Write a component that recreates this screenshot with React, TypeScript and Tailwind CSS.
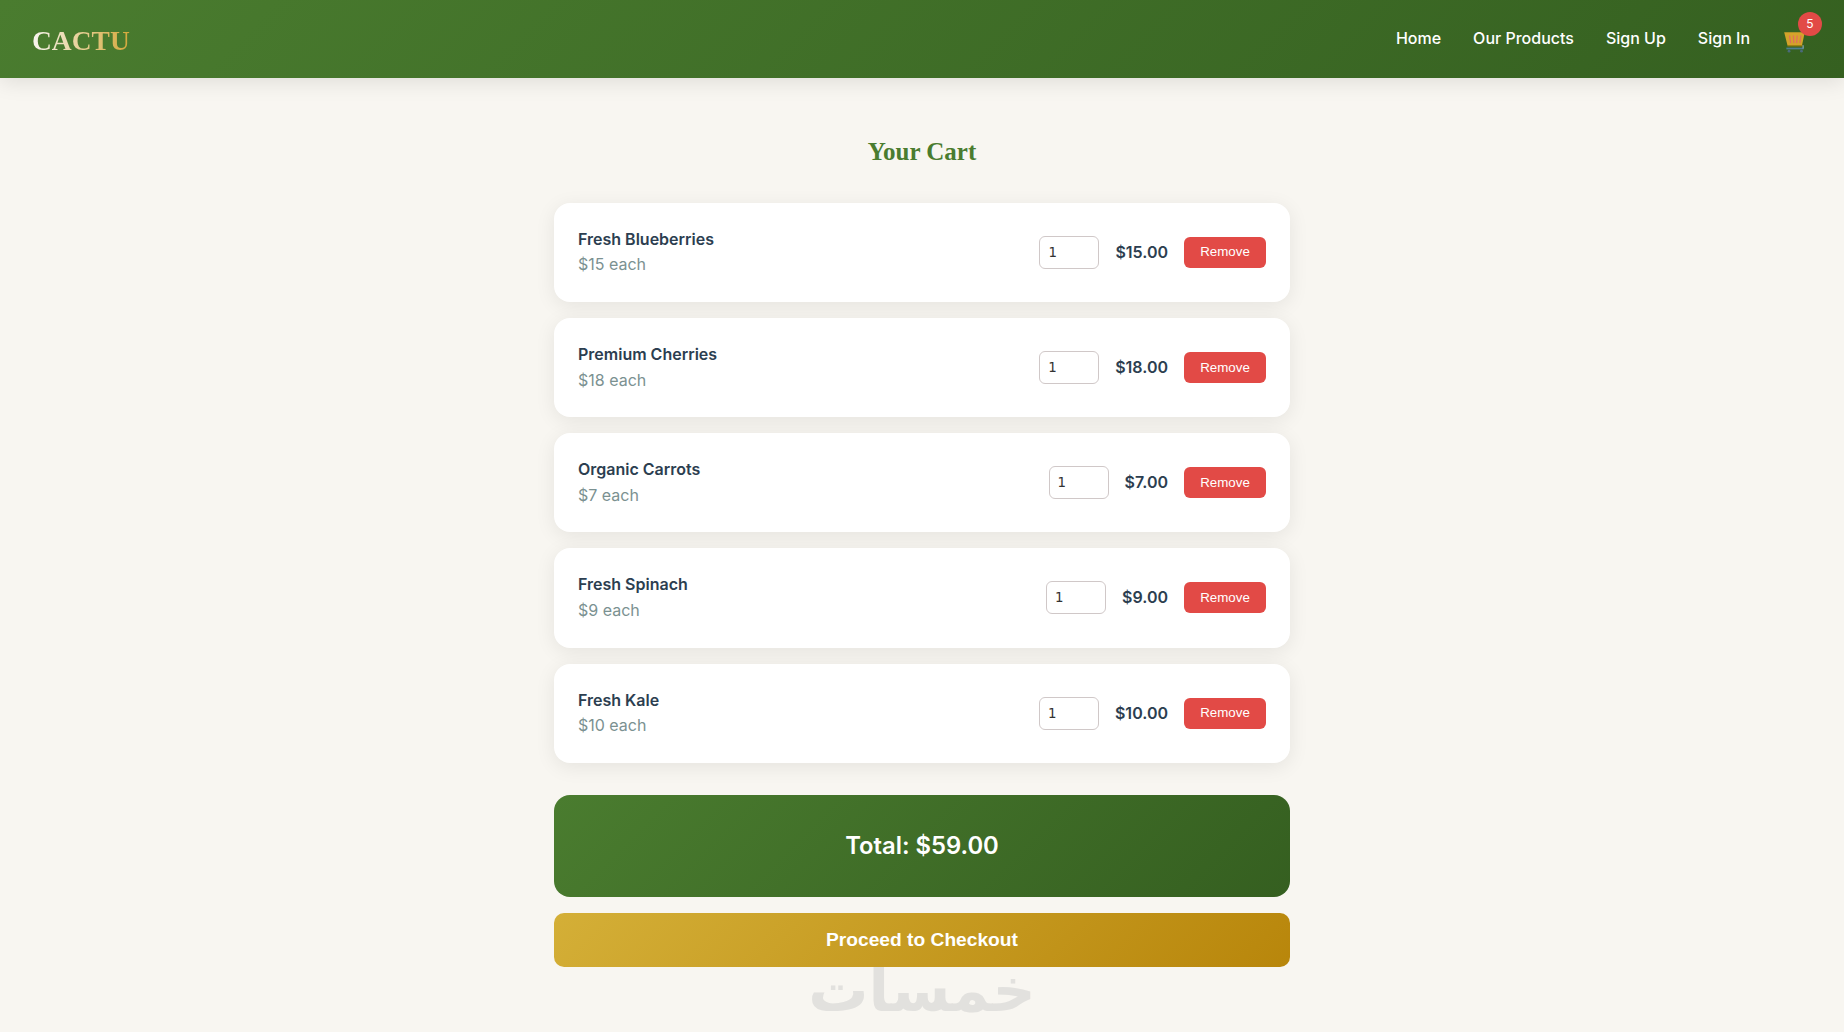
const items = [
  { name: "Fresh Blueberries", each: "$15 each", price: "$15.00" },
  { name: "Premium Cherries", each: "$18 each", price: "$18.00" },
  { name: "Organic Carrots", each: "$7 each", price: "$7.00" },
  { name: "Fresh Spinach", each: "$9 each", price: "$9.00" },
  { name: "Fresh Kale", each: "$10 each", price: "$10.00" },
];

function CartIcon() {
  return (
    <svg width="26" height="26" viewBox="0 0 24 24" className="block translate-y-1">
      <path d="M2 3h19l-2.500 12H5z" fill="#d4a32a" />
      <path d="M7 6l1 7M10.500 6l.5 7M14 6l-.5 7M17.500 6l-1 7" stroke="#e0705a" strokeWidth="1.2" />
      <path d="M5 15.500h14" stroke="#b8860b" strokeWidth="1" />
      <path d="M4 18h16" stroke="#4f7f8f" strokeWidth="1.6" />
      <path d="M19.500 15v3" stroke="#7fa3ad" strokeWidth="1.2" />
      <circle cx="6.500" cy="20.500" r="1.300" fill="#4a6a7a" />
      <circle cx="18" cy="20.500" r="1.300" fill="#4a6a7a" />
    </svg>
  );
}

function CartRow({ item }: { item: (typeof items)[number] }) {
  return (
    <div className="flex items-center justify-between rounded-2xl bg-white p-6 shadow-[0_4px_20px_rgba(0,0,0,0.08)]">
      <div>
        <div className="text-base font-semibold leading-[1.6] text-[#2c3e50]">{item.name}</div>
        <div className="text-base leading-[1.6] text-[#7b9191]">{item.each}</div>
      </div>
      <div className="flex items-center gap-4">
        <input
          type="number"
          defaultValue={1}
          className="h-[33px] w-[60px] rounded-md border border-[#d0c8c8] px-2 font-['DejaVu_Sans',sans-serif] text-[13.33px] text-[#333]"
        />
        <span className="pb-px text-base font-semibold text-[#2c3e50]">{item.price}</span>
        <button className="h-[31px] w-[82px] rounded-md bg-[#e24a46] font-['Liberation_Sans',sans-serif] text-[13.33px] text-white">
          Remove
        </button>
      </div>
    </div>
  );
}

export default function App() {
  return (
    <div className="relative min-h-[1032px] overflow-hidden bg-[#f8f6f1] font-['Inter',sans-serif]">
      <header className="relative z-10 flex h-[78px] items-center justify-between bg-[linear-gradient(135deg,#4a7c2f,#356020)] px-8 shadow-[0_4px_20px_rgba(0,0,0,0.1)]">
        <span className="bg-[linear-gradient(90deg,#f8f6f1,#d4a83a)] bg-clip-text pt-1 font-['Liberation_Serif',serif] text-[27.5px] font-bold text-transparent">
          CACTU
        </span>
        <nav className="flex items-center gap-8 pb-[2px] text-base font-medium text-white">
          <a>Home</a>
          <a>Our Products</a>
          <a>Sign Up</a>
          <a>Sign In</a>
          <a className="relative w-[30px] pl-[0px]">
            <CartIcon />
            <span className="absolute -right-[10px] -top-[13px] flex h-6 w-6 items-center justify-center rounded-full bg-[#e24a46] text-xs font-normal">
              5
            </span>
          </a>
        </nav>
      </header>

      <main className="relative z-10 mx-auto w-[800px] px-8 pt-12">
        <h1 className="mb-[24.8px] text-center font-['Liberation_Serif',serif] text-[25px] font-bold leading-[52px] text-[#4a7c2f]">
          Your Cart
        </h1>
        <div className="flex flex-col gap-4">
          {items.map((item) => (
            <CartRow key={item.name} item={item} />
          ))}
        </div>
        <div className="mt-8 rounded-2xl bg-[linear-gradient(135deg,#4a7c2f,#355f20)] p-8 text-center text-[23.8px] font-semibold leading-[38.4px] text-white">
          Total: $59.00
        </div>
        <button className="mt-4 h-[54px] w-full rounded-[10px] bg-[linear-gradient(135deg,#d4af37,#b8860b)] font-['Liberation_Sans',sans-serif] text-[19.2px] font-bold text-white">
          Proceed to Checkout
        </button>
      </main>

      <div className="absolute left-1/2 top-[968px] -translate-x-1/2 font-['DejaVu_Sans',sans-serif] text-[60px] font-bold leading-[44px] text-[#e2e1de]">
        خمسات
      </div>
    </div>
  );
}
